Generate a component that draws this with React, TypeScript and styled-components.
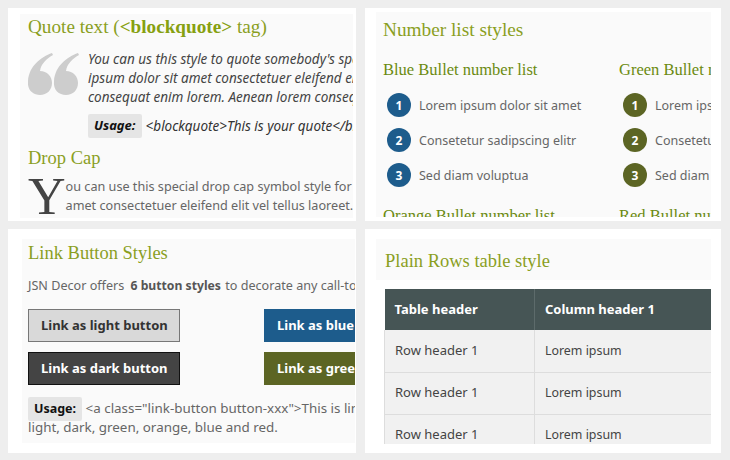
import React from "react";
import styled, { createGlobalStyle } from "styled-components";

const Global = createGlobalStyle`
  html, body { margin: 0; padding: 0; background: #eeeeee; }
  body { width: 730px; height: 460px; overflow: hidden; font-family: "Noto Sans", sans-serif; }
`;
const Page = styled.div`
  width: 730px; height: 460px; box-sizing: border-box; padding: 8px 9px 7px 8px;
  display: grid; grid-template-columns: 348px 356px; grid-template-rows: 213px 224px;
  column-gap: 9px; row-gap: 8px;
`;
const Panel = styled.section<{ $pad: string }>`
  background: #fff; padding: ${(p) => p.$pad}; display: flex; overflow: hidden; box-sizing: border-box;
`;
const Inner = styled.div<{ $pad: string }>`
  flex: 1; min-width: 0; background: #fafafa; padding: ${(p) => p.$pad}; overflow: hidden; color: #666;
  font-size: 13px; line-height: 19px; white-space: nowrap;
`;
const Title = styled.h2<{ $mt?: number; $mb?: number; $size?: number }>`
  margin: ${(p) => p.$mt ?? 0}px 0 ${(p) => p.$mb ?? 10}px; font: normal ${(p) => p.$size ?? 18.5}px/24px "Liberation Serif", serif; color: #8a9f1f;
  b { font-weight: bold; color: #86a010; }
`;
const QuoteRow = styled.div`display: flex; gap: 9px;`;
const QuoteMark = styled.svg`width: 51px; height: 44px; flex: none; margin-top: 2px;`;
const QuoteBody = styled.div`font-style: italic; font-size: 13.5px; color: #444; min-width: 0;`;
const Usage = styled.div`margin-top: 7px; display: flex; align-items: center; gap: 4px; color: #333;`;
const Tag = styled.span`
  display: inline-block; background: #e5e5e5; color: #111; font-weight: bold; padding: 2px 6px 3px; line-height: 19px; border-radius: 2px; font-size: 13px;
`;
const NoteTag = styled(Tag)`
  font-size: 12.5px; vertical-align: middle; margin: -3px 0;
`;
const DropText = styled.div`color: #666; font-size: 12.65px;`;
const DropCap = styled.span`
  float: left; font: 52px/38px "Liberation Serif", serif; color: #444; margin: 1px 0 0 0; height: 38px;
`;
const Columns = styled.div`display: grid; grid-template-columns: 236px 236px;`;
const SubTitle = styled.h3`margin: 0 0 11px; font: normal 16.5px/24px "Liberation Serif", serif; color: #6b8a10;`;
const List = styled.ol`margin: 0 0 17px; padding: 0 0 0 4px; list-style: none; display: flex; flex-direction: column; gap: 11px;`;
const Item = styled.li`display: flex; align-items: center; gap: 8px; height: 24px; color: #666; font-size: 12.5px;`;
const Bullet = styled.span<{ $c: string }>`
  width: 24px; height: 24px; border-radius: 50%; background: ${(p) => p.$c}; color: #fff; font-weight: bold; font-size: 12px;
  display: flex; align-items: center; justify-content: center; flex: none;
`;
const Para = styled.p`margin: 0 0 14px; font-size: 12.6px; b { color: #555; font-size: 12.2px; margin: 0 1px 0 3px; }`;
const Buttons = styled.div`display: grid; grid-template-columns: 152px 152px; column-gap: 84px; row-gap: 10px; margin-bottom: 14px;`;
const Btn = styled.a<{ $bg: string; $fg: string; $bd: string }>`
  display: block; box-sizing: border-box; height: 33px; line-height: 31px; padding-left: 12px; font-weight: bold; font-size: 13px;
  background: ${(p) => p.$bg}; color: ${(p) => p.$fg}; border: 1px solid ${(p) => p.$bd};
`;
const Note = styled.div`line-height: 19px; color: #666; font-size: 13.4px;`;
const TableTitle = styled.div`padding: 10px 0 7px 9px; margin-bottom: 9px; background: #fafafa;`;
const Tbl = styled.table`
  border-collapse: collapse; width: 400px; table-layout: fixed; margin-left: 8px; font-size: 13px;
`;
const Th = styled.th<{ $w: number }>`
  width: ${(p) => p.$w}px; height: 41px; padding: 0 10px 2px; box-sizing: border-box; background: #465555; color: #fff; text-align: left; font-weight: bold;
  border-right: 1px solid #5d6b6b;
`;
const Td = styled.td<{ $size?: number }>`
  height: 42px; padding: 0 10px 1px; box-sizing: border-box; background: #f1f1f1; color: #444; border: 1px solid #ddd; border-top: 0;
  font-size: ${(p) => p.$size ?? 13}px; line-height: 19px;
`;
const TableInner = styled.div`flex: 1; min-width: 0; overflow: hidden; white-space: nowrap; background: #fff;`;

const lines = ["Lorem ipsum dolor sit amet", "Consetetur sadipscing elitr", "Sed diam voluptua"];
const NumList = ({ c }: { c: string }) => (
  <List>
    {lines.map((l, i) => (
      <Item key={l}><Bullet $c={c}>{i + 1}</Bullet>{l}</Item>
    ))}
  </List>
);

export default function App() {
  return (
    <>
      <Global />
      <Page>
        <Panel $pad="6px 3px 3px 12px">
          <Inner $pad="1px 0 0 8px">
            <Title $mb={11} $size={19.2}>Quote text (<b>&lt;blockquote&gt;</b> tag)</Title>
            <QuoteRow>
              <QuoteMark viewBox="0 0 51 44">
                <g fill="#cdcdcd">
                  <path d="M24 1 C13 5 1 14 0 29 C-1 38 5 43 12 43 C19 43 24 38 24 31 C24 24 19 19 12 19 C13 12 18 7 25 3 Z" />
                  <path d="M50 1 C39 5 27 14 26 29 C25 38 31 43 38 43 C45 43 50 38 50 31 C50 24 45 19 38 19 C39 12 44 7 51 3 Z" />
                </g>
              </QuoteMark>
              <QuoteBody>
                You can us this style to quote somebody's speech. Lorem<br />
                ipsum dolor sit amet consectetuer eleifend elit vel<br />
                consequat enim lorem. Aenean lorem consequat vel
                <Usage><Tag>Usage:</Tag>&lt;blockquote&gt;This is your quote&lt;/blockquote&gt;</Usage>
              </QuoteBody>
            </QuoteRow>
            <Title $mt={8} $mb={7}>Drop Cap</Title>
            <DropText>
              <DropCap>Y</DropCap>ou can use this special drop cap symbol style for your<br />
              amet consectetuer eleifend elit vel tellus laoreet.
            </DropText>
          </Inner>
        </Panel>
        <Panel $pad="4px 10px 4px 11px">
          <Inner $pad="6px 0 0 7px">
            <Title $mb={16} $size={19.3}>Number list styles</Title>
            <Columns>
              <div><SubTitle>Blue Bullet number list</SubTitle><NumList c="#1d5c8c" /><SubTitle>Orange Bullet number list</SubTitle></div>
              <div><SubTitle>Green Bullet number list</SubTitle><NumList c="#5c6524" /><SubTitle>Red Bullet number list</SubTitle></div>
            </Columns>
          </Inner>
        </Panel>
        <Panel $pad="10px 1px 10px 14px">
          <Inner $pad="2px 0 0 6px">
            <Title $mb={11}>Link Button Styles</Title>
            <Para>JSN Decor offers <b>6 button styles</b> to decorate any call-to-action links.</Para>
            <Buttons>
              <Btn $bg="#d9d9d9" $fg="#333" $bd="#777">Link as light button</Btn>
              <Btn $bg="#1d5c8c" $fg="#fff" $bd="#1d5c8c">Link as blue button</Btn>
              <Btn $bg="#444" $fg="#fff" $bd="#111">Link as dark button</Btn>
              <Btn $bg="#5c6524" $fg="#fff" $bd="#5c6524">Link as green button</Btn>
            </Buttons>
            <Note>
              <NoteTag>Usage:</NoteTag> &lt;a class="link-button button-xxx"&gt;This is link button&lt;/a&gt;<br />
              light, dark, green, orange, blue and red.
            </Note>
          </Inner>
        </Panel>
        <Panel $pad="10px 10px 9px 11px">
          <TableInner>
            <TableTitle><Title $mb={0}>Plain Rows table style</Title></TableTitle>
            <Tbl>
              <thead><tr><Th $w={150}>Table header</Th><Th $w={250}>Column header 1</Th></tr></thead>
              <tbody>
                {[0, 1, 2].map((i) => (
                  <tr key={i}><Td>Row header 1</Td><Td $size={12.4}>Lorem ipsum</Td></tr>
                ))}
              </tbody>
            </Tbl>
          </TableInner>
        </Panel>
      </Page>
    </>
  );
}
